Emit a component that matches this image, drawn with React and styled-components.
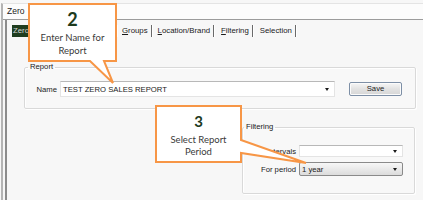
import React from "react";
import styled, { createGlobalStyle } from "styled-components";

const GlobalStyle = createGlobalStyle`
  html, body {
    margin: 0;
    padding: 0;
    background: #f7f7f7;
  }
`;

const Page = styled.div`
  position: relative;
  width: 423px;
  height: 200px;
  overflow: hidden;
  background: #f7f7f7;
  font-family: "Liberation Sans", Arial, sans-serif;
  font-size: 7.7px;
  color: #1a1a1a;
`;

const Window = styled.div`
  display: flex;
  flex-direction: column;
  height: 196px;
  margin: 3px 0 0 1px;
  border-left: 2px solid #b4b4b4;
  border-top: 1px solid #e4e4e4;
`;

const TitleBar = styled.div`
  flex: none;
  height: 15px;
  padding-left: 4px;
  background: #fcfcfc;
  border-bottom: 1px solid #9c9c9c;
  font-size: 8.5px;
  line-height: 15px;
`;

const Body = styled.div`
  flex: 1;
  margin-left: 2px;
  border-left: 2px solid #8c8c8c;
`;

const TabStrip = styled.div`
  display: flex;
  margin: 5px 0 0 5px;
  height: 12px;
`;

const Tab = styled.div`
  flex: none;
  width: ${(p) => (p.$w ? `${p.$w}px` : "auto")};
  box-sizing: border-box;
  padding: 0 3px 0 ${(p) => p.$indent ?? 4}px;
  line-height: 12px;
  white-space: nowrap;
  overflow: hidden;
  font-size: 7.8px;
  background: ${(p) => (p.$active ? "#1f3d1f" : "transparent")};
  color: ${(p) => (p.$active ? "#d6d6d6" : "#1a1a1a")};
  border-right: 1px solid #6a6a6a;
  box-shadow: 1px 0 0 #ffffff;
  margin-right: 1px;
`;

const Key = styled.span`
  text-decoration: underline;
`;

const Group = styled.fieldset`
  margin: ${(p) => p.$top}px ${(p) => p.$right}px 0 ${(p) => p.$left}px;
  padding: ${(p) => p.$pad};
  min-width: 0;
  border: 1px solid #d9d9d9;
  border-radius: 2px;
  box-shadow: inset 1px 1px 0 #ffffff, 1px 1px 0 #ffffff;
  background: #f8f8f8;
`;

const Legend = styled.legend`
  margin-left: ${(p) => p.$indent}px;
  padding: 0 2px;
  font-size: 7.7px;
  line-height: 10px;
`;

const Row = styled.div`
  display: flex;
  align-items: center;
`;

const FieldGrid = styled.div`
  display: grid;
  grid-template-columns: 56px 104px;
  row-gap: 5px;
  align-items: center;
`;

const FieldLabel = styled.div`
  width: ${(p) => p.$w}px;
  box-sizing: border-box;
  padding-right: 3px;
  text-align: right;
  white-space: nowrap;
`;

const Combo = styled.div`
  display: flex;
  align-items: center;
  width: ${(p) => p.$w}px;
  height: ${(p) => p.$h}px;
  box-sizing: border-box;
  padding-left: 2px;
  background: ${(p) =>
    p.$active ? "linear-gradient(#f7f7f7, #dcdcdc)" : "#ffffff"};
  border: 1px solid ${(p) => (p.$active ? "#8a8a8a" : "#e4e4e4")};
  border-top-color: ${(p) => (p.$active ? "#8a8a8a" : "#b8b8b8")};
  border-radius: ${(p) => (p.$active ? 2 : 0)}px;
  white-space: nowrap;
`;

const Arrow = styled.span`
  margin-left: auto;
  margin-right: 5px;
  width: 0;
  height: 0;
  border-left: 2.5px solid transparent;
  border-right: 2.5px solid transparent;
  border-top: 3px solid #1a1a1a;
`;

const Button = styled.div`
  width: 53px;
  height: 14px;
  margin-left: 14px;
  box-sizing: border-box;
  border: 1px solid #7d8fa6;
  border-radius: 2px;
  background: linear-gradient(#f6f6f6, #e2e2e2 50%, #d6d6d6);
  box-shadow: inset 0 0 0 1px #fbfbfb;
  text-align: center;
  line-height: 12px;
`;

const Overlay = styled.svg`
  position: absolute;
  left: 0;
  top: 0;
  pointer-events: none;
`;

const CalloutText = styled.div`
  position: absolute;
  left: ${(p) => p.$x}px;
  top: ${(p) => p.$y}px;
  width: ${(p) => p.$w}px;
  padding-top: ${(p) => p.$pad}px;
  display: flex;
  flex-direction: column;
  align-items: center;
  font-family: Lato, "Open Sans", sans-serif;
  font-size: 9.5px;
  color: #3a3a3a;
  text-align: center;
`;

const StepNumber = styled.div`
  font-weight: 700;
  font-size: ${(p) => p.$size}px;
  line-height: ${(p) => p.$size + 2}px;
  color: #1d3a1d;
  margin-bottom: ${(p) => p.$gap}px;
`;

const CalloutLine = styled.div`
  line-height: ${(p) => p.$lh}px;
  white-space: nowrap;
`;

const ORANGE = "#f79646";

export default function App() {
  return (
    <Page>
      <GlobalStyle />
      <Window>
        <TitleBar>Zero</TitleBar>
        <Body>
          <TabStrip>
            <Tab $active $w={105} $indent={1}>
              Zero
            </Tab>
            <Tab>
              <Key>G</Key>roups
            </Tab>
            <Tab $indent={5}>
              <Key>L</Key>ocation/Brand
            </Tab>
            <Tab $indent={6}>
              <Key>F</Key>iltering
            </Tab>
            <Tab $indent={6}>Selection</Tab>
          </TabStrip>

          <Group $top={25} $right={7} $left={17} $pad="9px 0 11px 0">
            <Legend $indent={3}>Report</Legend>
            <Row>
              <FieldLabel $w={35}>Name</FieldLabel>
              <Combo $w={275} $h={16}>
                TEST ZERO SALES REPORT
                <Arrow />
              </Combo>
              <Button>Save</Button>
            </Row>
          </Group>

          <Group $top={13} $right={8} $left={235} $pad="13px 11px 17px 0">
            <Legend $indent={1}>Filtering</Legend>
            <FieldGrid>
              <FieldLabel $w={56}>Intervals</FieldLabel>
              <Combo $w={104} $h={12}>
                <Arrow />
              </Combo>
              <FieldLabel $w={56}>For period</FieldLabel>
              <Combo $w={104} $h={14} $active>
                1 year
                <Arrow />
              </Combo>
            </FieldGrid>
          </Group>
        </Body>
      </Window>

      <Overlay width="423" height="200" viewBox="0 0 423 200">
        <path
          d="M29 4 H116 V61 H104 L113 83 L90 61 H29 Z"
          fill="#ffffff"
          stroke={ORANGE}
          strokeWidth="2"
          strokeLinejoin="miter"
        />
        <path
          d="M156 106 H241 V140 L306 163 L241 153 V162 H156 Z"
          fill="#ffffff"
          stroke={ORANGE}
          strokeWidth="2"
          strokeLinejoin="miter"
        />
      </Overlay>

      <CalloutText $x={29} $y={4} $w={87} $pad={5}>
        <StepNumber $size={18} $gap={3}>
          2
        </StepNumber>
        <CalloutLine $lh={12.5}>Enter Name for</CalloutLine>
        <CalloutLine $lh={12.5}>Report</CalloutLine>
      </CalloutText>

      <CalloutText $x={156} $y={106} $w={85} $pad={7}>
        <StepNumber $size={15} $gap={4}>
          3
        </StepNumber>
        <CalloutLine $lh={11.5}>Select Report</CalloutLine>
        <CalloutLine $lh={11.5}>Period</CalloutLine>
      </CalloutText>
    </Page>
  );
}
